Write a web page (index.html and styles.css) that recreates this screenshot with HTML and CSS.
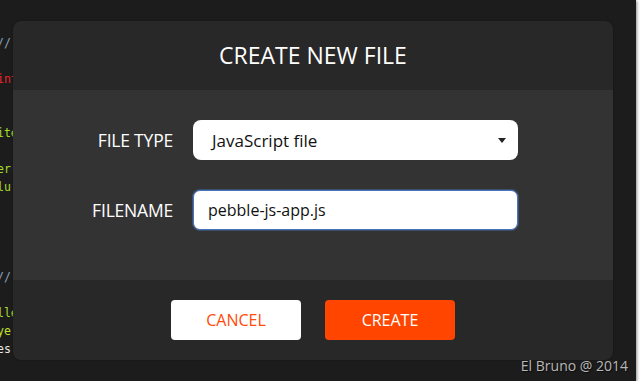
FILE: index.html
```html
<!DOCTYPE html>
<html lang="en">
<head>
  <meta charset="UTF-8">
  <meta name="viewport" content="width=device-width, initial-scale=1.0">
  <title>Create New File</title>
  <link rel="stylesheet" href="styles.css">
</head>
<body>

  <div class="screen">
    <!-- editor behind the modal -->
    <div class="code">
      <div class="line c-comment">//</div>
      <div class="line"></div>
      <div class="line c-red">int</div>
      <div class="line"></div>
      <div class="line"></div>
      <div class="line c-green">ite</div>
      <div class="line"></div>
      <div class="line c-green">er<span class="c-blue">(</span></div>
      <div class="line c-green">lu</div>
      <div class="line"></div>
      <div class="line"></div>
      <div class="line"></div>
      <div class="line"></div>
      <div class="line c-comment">//</div>
      <div class="line"></div>
      <div class="line c-green">lle</div>
      <div class="line c-lime">ye</div>
      <div class="line c-white">es</div>
    </div>

    <div class="modal">
      <div class="modal-header">
        <h2>Create New File</h2>
      </div>
      <div class="modal-body">
        <label class="field-label">File Type</label>
        <div class="dropdown">
          <span>JavaScript file</span>
          <span class="caret"></span>
        </div>
        <label class="field-label" for="filename">Filename</label>
        <input type="text" id="filename" class="text-input" value="pebble-js-app.js">
      </div>
      <div class="modal-footer">
        <button type="button" class="btn btn-cancel">Cancel</button>
        <button type="button" class="btn btn-create">Create</button>
      </div>
    </div>

    <span class="credit">El Bruno @ 2014</span>
  </div>

</body>
</html>
```

FILE: styles.css
```css
/* Reset */
* {
  margin: 0;
  padding: 0;
  box-sizing: border-box;
}

body {
  background: #fff;
  font-family: "Open Sans", Arial, sans-serif;
}

/* Screenshot area */
.screen {
  position: relative;
  width: 636px;
  height: 381px;
  background: #1c1c1c;
  box-shadow: 1px 1px 3px rgba(0, 0, 0, 0.45);
  overflow: hidden;
}

/* Code editor fragments */
.code {
  padding-top: 34px;
  margin-left: -3px;
  font-family: "DejaVu Sans Mono", monospace;
  font-size: 11.5px;
}

.code .line {
  height: 18px;
  line-height: 18px;
  white-space: pre;
}

.c-comment { color: #8ea3c0; }
.c-red { color: #e8242c; }
.c-green { color: #a6d92e; }
.c-lime { color: #c2e02a; }
.c-blue { color: #66b8ef; }
.c-white { color: #e8e8e8; }

/* Modal */
.modal {
  position: absolute;
  left: 13px;
  top: 21px;
  width: 600px;
  border-radius: 8px;
  overflow: hidden;
  background: #282828;
  box-shadow: 0 0 2px rgba(0, 0, 0, 0.4);
}

.modal-header {
  height: 69px;
  display: flex;
  align-items: center;
  justify-content: center;
}

.modal-header h2 {
  color: #fff;
  font-size: 23px;
  font-weight: 400;
  text-transform: uppercase;
  padding-bottom: 2px;
}

.modal-body {
  height: 190px;
  background: #333;
  display: grid;
  grid-template-columns: 160px 325px;
  grid-auto-rows: 40px;
  column-gap: 20px;
  row-gap: 30px;
  padding-top: 30px;
}

.field-label {
  color: #fff;
  font-size: 17.5px;
  text-transform: uppercase;
  text-align: right;
  align-self: center;
  letter-spacing: -0.2px;
}

.dropdown {
  display: flex;
  align-items: center;
  justify-content: space-between;
  padding: 0 12px 0 19px;
  background: #fff;
  border-radius: 8px;
  color: #111;
  font-size: 17px;
}

.caret {
  width: 0;
  height: 0;
  border-left: 4px solid transparent;
  border-right: 4px solid transparent;
  border-top: 5px solid #222;
}

.text-input {
  width: 100%;
  height: 40px;
  padding: 0 14px;
  background: #fff;
  border: 1px solid #4a72b8;
  border-radius: 7px;
  box-shadow: 0 0 0 1px rgba(74, 114, 184, 0.45);
  color: #111;
  font-family: "Open Sans", Arial, sans-serif;
  font-size: 16px;
  outline: none;
}

.modal-footer {
  height: 80px;
  display: flex;
  justify-content: center;
  gap: 24px;
  padding-top: 20px;
}

.btn {
  width: 130px;
  height: 40px;
  border: none;
  border-radius: 4px;
  font-family: "Open Sans", Arial, sans-serif;
  font-size: 16px;
  text-transform: uppercase;
  cursor: pointer;
}

.btn-cancel {
  background: #fff;
  color: #ff4a0a;
}

.btn-create {
  background: #ff4500;
  color: #fff;
}

/* Watermark */
.credit {
  position: absolute;
  right: 8px;
  bottom: 6px;
  color: #b8b8b8;
  font-size: 14px;
  text-shadow: 1px 1px 1px rgba(0, 0, 0, 0.6);
}
```
